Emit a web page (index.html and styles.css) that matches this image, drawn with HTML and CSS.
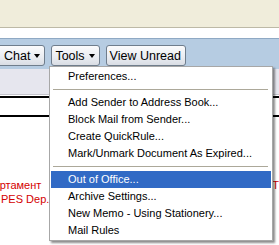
FILE: index.html
```html
<!DOCTYPE html>
<html>
<head>
<meta charset="utf-8">
<link rel="stylesheet" href="styles.css">
</head>
<body>
<div class="page">
  <div class="topbar"></div>
  <div class="spacer"></div>
  <div class="toolbar">
    <button class="btn btn-chat">Chat <span class="arrow"></span></button>
    <button class="btn">Tools <span class="arrow"></span></button>
    <button class="btn">View Unread</button>
  </div>
  <div class="viewhead"></div>
  <div class="rule-gap"></div>
  <div class="rule"></div>
  <div class="content">
    <div class="red-line"><span class="red-left">Департамент</span><span class="red-right">Т</span></div>
    <div class="red-line"><span>PES Dep.</span></div>
  </div>

  <div class="menu">
    <div class="item">Preferences...</div>
    <div class="sep"></div>
    <div class="item">Add Sender to Address Book...</div>
    <div class="item">Block Mail from Sender...</div>
    <div class="item">Create QuickRule...</div>
    <div class="item">Mark/Unmark Document As Expired...</div>
    <div class="sep"></div>
    <div class="item active">Out of Office...</div>
    <div class="item">Archive Settings...</div>
    <div class="item">New Memo - Using Stationery...</div>
    <div class="item">Mail Rules</div>
  </div>
</div>
</body>
</html>
```
FILE: styles.css
```css
html, body {
  margin: 0;
  padding: 0;
  background: #ffffff;
}
.page {
  position: relative;
  width: 279px;
  height: 245px;
  overflow: hidden;
  font-family: "Liberation Sans", Arial, sans-serif;
}
.topbar {
  height: 27px;
  background: #f0eddb;
  border-bottom: 1px solid #bdb9a6;
}
.spacer {
  height: 10px;
  background: #ffffff;
}
.toolbar {
  display: flex;
  gap: 6px;
  height: 24px;
  padding-top: 6px;
  background: #b6cce2;
  border-top: 1px solid #8fa9c4;
}
.btn {
  display: flex;
  align-items: center;
  gap: 4px;
  height: 21px;
  margin: 0;
  padding: 0 4px 0 3px;
  font-family: "Liberation Sans", Arial, sans-serif;
  font-size: 12.5px;
  color: #000;
  background: linear-gradient(#fbfbfc, #e9ecf1 60%, #d9dde4);
  border: 1px solid #6f7d8c;
  border-radius: 3px;
}
.btn-chat {
  margin-left: -7px;
  padding-left: 10px;
}
.arrow {
  width: 0;
  height: 0;
  border-left: 3.5px solid transparent;
  border-right: 3.5px solid transparent;
  border-top: 4px solid #000;
}
.viewhead {
  height: 25px;
  background: #e6e6ee;
  border-bottom: 1px solid #c4c4cc;
}
.rule-gap {
  height: 1px;
  border-bottom: 2px solid #000;
}
.rule {
  height: 17px;
  border-bottom: 2px solid #000;
}
.content {
  padding-top: 61px;
  color: #d40000;
  font-size: 11px;
  line-height: 14px;
}
.red-line {
  display: flex;
  justify-content: space-between;
  padding-left: 1px;
}
.red-left {
  margin-left: -27px;
}
.red-right {
  margin-right: 0;
}
.menu {
  position: absolute;
  left: 49px;
  top: 66px;
  width: 220px;
  padding: 1px 1px;
  background: #ffffff;
  border: 1px solid #a7a7a7;
  box-shadow: 2px 2px 2px rgba(0, 0, 0, 0.45);
  font-size: 11px;
  color: #000;
}
.item {
  height: 17px;
  line-height: 17px;
  padding-left: 17px;
  white-space: nowrap;
}
.item.active {
  background: #316ac5;
  color: #ffffff;
}
.sep {
  height: 1px;
  margin: 4px 3px 4px 2px;
  background: #aca899;
}
```
